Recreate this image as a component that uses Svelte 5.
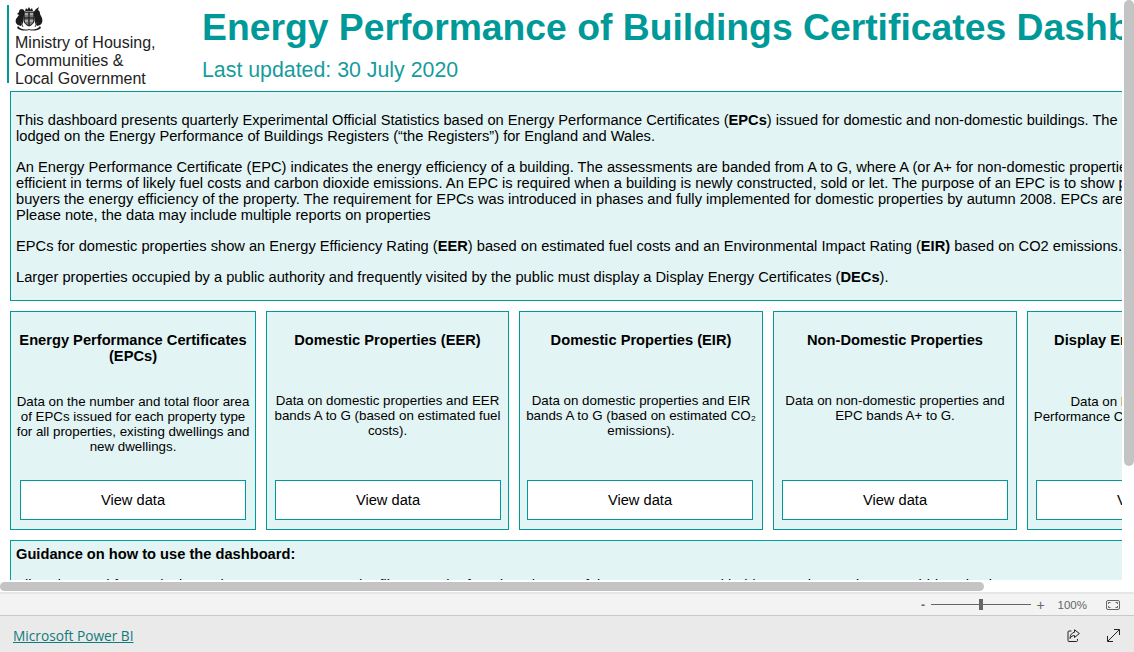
<script>
  const cards = [
    {
      title: 'Energy Performance Certificates (EPCs)',
      lines: ['Data on the number and total floor area', 'of EPCs issued for each property type', 'for all properties, existing dwellings and', 'new dwellings.'],
      width: 246,
      titleHeight: 62,
      btnLeft: 10
    },
    {
      title: 'Domestic Properties (EER)',
      lines: ['Data on domestic properties and EER', 'bands A to G (based on estimated fuel', 'costs).'],
      width: 243,
      titleHeight: 61,
      btnLeft: 9
    },
    {
      title: 'Domestic Properties (EIR)',
      lines: ['Data on domestic properties and EIR', 'bands A to G (based on estimated CO₂', 'emissions).'],
      width: 244,
      titleHeight: 61,
      btnLeft: 8
    },
    {
      title: 'Non-Domestic Properties',
      lines: ['Data on non-domestic properties and', 'EPC bands A+ to G.'],
      width: 244,
      titleHeight: 61,
      btnLeft: 9
    },
    {
      title: 'Display Energy Certificates',
      lines: ['Data on DECs and Energy', 'Performance Certificates in each band.'],
      width: 244,
      titleHeight: 62,
      btnLeft: 9
    }
  ];
</script>

<div class="viewer">
  <div class="canvas-wrap">
    <div class="canvas">
      <header class="top">
        <div class="logo">
          <svg class="crest" width="28" height="24" viewBox="0 0 28 24" aria-hidden="true">
            <!-- crown -->
            <path d="M10 4l1-3 1.500 1.500L14 0l1.500 2.500L17 1l1 3z" fill="#222" />
            <!-- lion, left -->
            <path d="M7 2c-2 0-3 1-3 3L2 7l2 1-3 4c-1 3 0 5 2 6l3 1 2-3 1-8 1-2-1-3z" fill="#1c1c1c" />
            <!-- unicorn, right -->
            <path d="M21 2l3-2-1 3c2 1 2 3 2 4l2 4c1 3 0 6-2 7l-3 1-2-3-1-8-1-2z" fill="#1c1c1c" />
            <!-- shield -->
            <path d="M9 5h10v8c0 3-2 5-5 6-3-1-5-3-5-6z" fill="#777" stroke="#111" />
            <path d="M14 5v14M9 11h10" stroke="#111" />
            <path d="M10 7h3M15 7h3M10 14h3M15 14h3" stroke="#ddd" />
            <!-- motto ribbon -->
            <path d="M3 19c3 4 8 4 11 3 3 1 8 1 11-3l1 2c-3 3-9 3-12 2-3 1-9 1-12-2z" fill="#222" />
            <path d="M6 15l2 5M22 15l-2 5" stroke="#444" />
          </svg>
          <div class="logo-text">Ministry of Housing,<br />Communities &amp;<br />Local Government</div>
        </div>
        <div class="heading">
          <h1>Energy Performance of Buildings Certificates Dashboard</h1>
          <p>Last updated: 30 July 2020</p>
        </div>
      </header>

      <section class="intro">
        <p>This dashboard presents quarterly Experimental Official Statistics based on Energy Performance Certificates (<b>EPCs</b>) issued for domestic and non-domestic buildings. The data are<br />lodged on the Energy Performance of Buildings Registers (“the Registers”) for England and Wales.</p>
        <p>An Energy Performance Certificate (EPC) indicates the energy efficiency of a building. The assessments are banded from A to G, where A (or A+ for non-domestic properties) is the most<br />efficient in terms of likely fuel costs and carbon dioxide emissions. An EPC is required when a building is newly constructed, sold or let. The purpose of an EPC is to show prospective tenants or<br />buyers the energy efficiency of the property. The requirement for EPCs was introduced in phases and fully implemented for domestic properties by autumn 2008. EPCs are valid for ten years.<br />Please note, the data may include multiple reports on properties</p>
        <p>EPCs for domestic properties show an Energy Efficiency Rating (<b>EER</b>) based on estimated fuel costs and an Environmental Impact Rating (<b>EIR)</b> based on CO2 emissions.</p>
        <p>Larger properties occupied by a public authority and frequently visited by the public must display a Display Energy Certificates (<b>DECs</b>).</p>
      </section>

      <div class="cards">
        {#each cards as card}
          <article class="card" style="width: {card.width}px">
            <h2 style="height: {card.titleHeight}px">{card.title}</h2>
            <p class="desc">
              {#each card.lines as line}
                <span>{line}</span>
              {/each}
            </p>
            <div class="view-btn" style="margin-left: {card.btnLeft - 9}px">View data</div>
          </article>
        {/each}
      </div>

      <section class="guidance">
        <h3>Guidance on how to use the dashboard:</h3>
        <p>Filter data and for particular region or property type, the filters can be found on the top of the page. Press and hold 'CTRL' key and you can hide selections.</p>
      </section>
    </div>
  </div>

  <div class="scroll-y"></div>
  <div class="scroll-x"></div>

  <div class="zoom-bar">
    <span class="zoom-sign">-</span>
    <div class="slider"><i></i></div>
    <span class="zoom-sign plus">+</span>
    <span class="pct">100%</span>
    <svg class="fit" width="14" height="10" viewBox="0 0 14 10" aria-hidden="true">
      <rect x="0.5" y="0.5" width="13" height="9" rx="1.500" fill="#f3f3f3" stroke="#666" />
      <path d="M4.500 2.500H2.500V4M9.500 2.500h2V4M4.500 7.500H2.500V6M9.500 7.500h2V6" fill="none" stroke="#666" />
    </svg>
  </div>

  <footer class="footer">
    <span class="pbi">Microsoft Power BI</span>
    <div class="footer-icons">
      <svg width="13" height="13" viewBox="0 0 13 13" aria-hidden="true">
        <path d="M4.500 2H2a1 1 0 0 0-1 1v8.500a1 1 0 0 0 1 1h7.500a1 1 0 0 0 1-1V10" fill="none" stroke="#222" />
        <path d="M7.500 .8L12.400 4.500 7.500 8.500V6.500C5.500 6.500 4 7.500 3 9.500 3 6.500 4.800 3.500 7.500 3.200z" fill="none" stroke="#222" />
      </svg>
      <svg width="13" height="13" viewBox="0 0 13 13" aria-hidden="true">
        <path d="M1 12L12 1M7 .5h5.500V6M.5 7v5.500H6" fill="none" stroke="#222" />
      </svg>
    </div>
  </footer>
</div>

<style>
  :global(body) {
    margin: 0;
    background: #fff;
    overflow: hidden;
  }

  .viewer {
    position: relative;
    width: 1134px;
    height: 652px;
    display: flex;
    flex-direction: column;
    font-family: 'Liberation Sans', Arial, sans-serif;
    color: #000;
    overflow: hidden;
  }

  .canvas-wrap {
    width: 1122px;
    height: 580px;
    overflow: hidden;
    flex: none;
  }

  .canvas {
    width: 1400px;
    padding-left: 10px;
  }

  .top {
    display: flex;
    height: 91px;
  }

  .logo {
    width: 195px;
    height: 78px;
    margin-top: 5px;
    margin-left: -3px;
    flex: none;
    box-sizing: border-box;
    border-left: 2px solid #009999;
    padding-left: 6px;
  }

  .crest {
    display: block;
    height: 28px;
    margin-bottom: 1px;
  }

  .logo-text {
    font-size: 16px;
    line-height: 18px;
    color: #222;
    white-space: nowrap;
  }

  h1 {
    margin: 6px 0 0;
    font-size: 37.300px;
    line-height: 43px;
    font-weight: 700;
    color: #009999;
    white-space: nowrap;
  }

  .heading p {
    margin: 8px 0 0;
    font-size: 21.330px;
    line-height: 26px;
    color: #169c9c;
  }

  .intro {
    width: 1300px;
    height: 210px;
    box-sizing: border-box;
    border: 1px solid #009999;
    background: #e3f4f4;
    padding: 20px 5px 0;
    font-size: 14.670px;
    line-height: 16px;
    white-space: nowrap;
  }

  .intro p {
    margin: 0 0 15px;
  }

  .cards {
    display: flex;
    gap: 10px;
    margin-top: 10px;
  }

  .card {
    height: 219px;
    box-sizing: border-box;
    flex: none;
    border: 1px solid #009999;
    background: #e3f4f4;
    padding: 20px 8px 9px;
    display: flex;
    flex-direction: column;
    text-align: center;
  }

  h2 {
    margin: 0;
    font-size: 14.670px;
    line-height: 16px;
    font-weight: 700;
    flex: none;
  }

  .desc {
    margin: 0;
    font-size: 13.330px;
    line-height: 15px;
    white-space: nowrap;
    display: flex;
    flex-direction: column;
    align-items: center;
  }

  .desc span {
    display: block;
  }

  .view-btn {
    box-sizing: border-box;
    height: 40px;
    width: 226px;
    margin-top: auto;
    flex: none;
    align-self: flex-start;
    border: 1px solid #009999;
    background: #fff;
    font-size: 14.670px;
    line-height: 38px;
  }

  .guidance {
    width: 1300px;
    height: 100px;
    box-sizing: border-box;
    margin-top: 10px;
    border: 1px solid #00a0a0;
    background: #e3f4f4;
    padding: 5px 5px 0;
    font-size: 14.670px;
    line-height: 16px;
    white-space: nowrap;
  }

  h3 {
    margin: 0 0 15px;
    font-size: 14.670px;
    line-height: 16px;
    font-weight: 700;
  }

  .guidance p {
    margin: 0;
  }

  .scroll-y {
    position: absolute;
    right: 0;
    top: 0;
    width: 10px;
    height: 466px;
    background: #c4c4c4;
    border-radius: 5px;
  }

  .scroll-x {
    position: absolute;
    left: 0;
    top: 582px;
    width: 984px;
    height: 9px;
    background: #c4c4c4;
    border-radius: 5px;
  }

  .zoom-bar {
    margin-top: 12px;
    height: 24px;
    box-sizing: border-box;
    flex: none;
    background: #f3f3f3;
    border-top: 2px solid #e6e6e6;
    border-bottom: 1px solid #c8c8c8;
    display: flex;
    align-items: center;
    justify-content: flex-end;
    padding-right: 14px;
    color: #666;
    font-size: 11.500px;
  }

  .zoom-sign {
    font-weight: 700;
    font-size: 12px;
    width: 9px;
    margin-right: 3px;
    text-align: center;
  }

  .zoom-sign.plus {
    font-weight: 400;
    font-size: 14px;
    width: 8px;
    margin-left: 6px;
    margin-right: 0;
  }

  .slider {
    position: relative;
    width: 100px;
    height: 1px;
    background: #666;
  }

  .slider i {
    position: absolute;
    left: 48px;
    top: -5px;
    width: 4px;
    height: 11px;
    background: #666;
  }

  .pct {
    margin-left: 13px;
  }

  .fit {
    margin-left: 19px;
  }

  .footer {
    flex: 1;
    background: #eaeaea;
    display: flex;
    align-items: center;
    justify-content: space-between;
    padding: 3px 14px 0 13px;
  }

  .pbi {
    font-family: 'Open Sans', sans-serif;
    font-size: 13.700px;
    color: #117a7a;
    text-decoration: underline;
  }

  .footer-icons {
    display: flex;
    gap: 27px;
  }

  .footer-icons svg {
    display: block;
  }
</style>
